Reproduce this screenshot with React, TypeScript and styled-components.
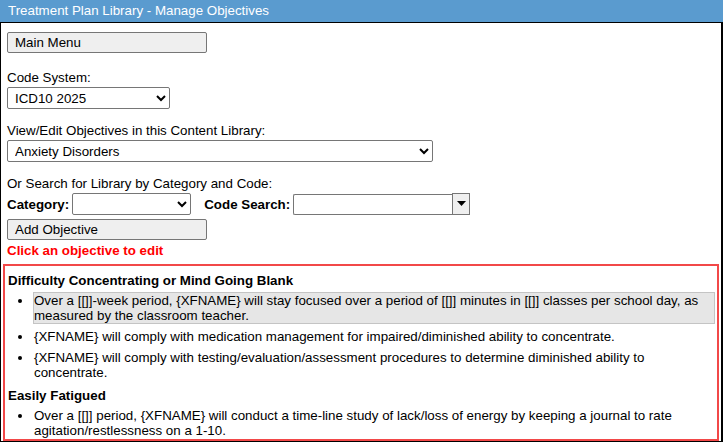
import * as React from 'react';
import styled, { createGlobalStyle } from 'styled-components';

interface Group {
	title: string;
	items: string[];
}

const groups: Group[] = [
	{
		title: 'Difficulty Concentrating or Mind Going Blank',
		items: [
			'Over a [[]]-week period, {XFNAME} will stay focused over a period of [[]] minutes in [[]] classes per school day, as measured by the classroom teacher.',
			'{XFNAME} will comply with medication management for impaired/diminished ability to concentrate.',
			'{XFNAME} will comply with testing/evaluation/assessment procedures to determine diminished ability to concentrate.',
		],
	},
	{
		title: 'Easily Fatigued',
		items: [
			'Over a [[]] period, {XFNAME} will conduct a time-line study of lack/loss of energy by keeping a journal to rate agitation/restlessness on a 1-10.',
		],
	},
];

const App: React.FC = () => {
	return (
		<>
			<GlobalStyle />
			<Header>Treatment Plan Library - Manage Objectives</Header>
			<Panel>
				<Form>
					<MenuButton type="button">Main Menu</MenuButton>
					<Field $gap={16}>
						<FieldLabel>Code System:</FieldLabel>
						<Select $width={163} defaultValue="icd10">
							<option value="icd10">ICD10 2025</option>
						</Select>
					</Field>
					<Field $gap={13}>
						<FieldLabel>View/Edit Objectives in this Content Library:</FieldLabel>
						<Select $width={426} defaultValue="anx">
							<option value="anx">Anxiety Disorders</option>
						</Select>
					</Field>
					<Field $gap={13}>
						<FieldLabel>Or Search for Library by Category and Code:</FieldLabel>
						<SearchRow>
							<InlineLabel>Category:</InlineLabel>
							<Select $width={119} defaultValue="">
								<option value=""></option>
							</Select>
							<InlineLabel $spaced>Code Search:</InlineLabel>
							<Combo>
								<ComboInput type="text" />
								<ComboButton type="button">
									<svg width="9" height="5" viewBox="0 0 9 5">
										<polygon points="0,0 9,0 4.5,5" fill="#000" />
									</svg>
								</ComboButton>
							</Combo>
						</SearchRow>
					</Field>
					<MenuButton type="button" $gap={4}>Add Objective</MenuButton>
					<Hint>Click an objective to edit</Hint>
				</Form>
				<ObjectivesBox>
					{groups.map((group, gi) => (
						<section key={group.title}>
							<GroupTitle>{group.title}</GroupTitle>
							<ObjectiveList>
								{group.items.map((item, ii) => (
									<ObjectiveItem key={ii} $active={gi === 0 && ii === 0}>
										{item}
									</ObjectiveItem>
								))}
							</ObjectiveList>
						</section>
					))}
				</ObjectivesBox>
			</Panel>
		</>
	);
};

export default App;

const GlobalStyle = createGlobalStyle`
	html, body {
		margin: 0;
		padding: 0;
		background: #fff;
	}
	body {
		font-family: "Liberation Sans", Arial, sans-serif;
		font-size: 10pt;
		color: #000;
	}
`

const Header = styled.div`
	height: 22px;
	padding-left: 8px;
	line-height: 22px;
	font-size: 10pt;
	color: #fff;
	background-color: #5a9bcf;
`

const Panel = styled.div`
	border: 1px solid #000;
	border-right-width: 2px;
`

const Form = styled.div`
	display: flex;
	flex-direction: column;
	align-items: flex-start;
	padding: 9px 6px 0;
`

const MenuButton = styled.button<{ $gap?: number }>`
	box-sizing: border-box;
	width: 200px;
	height: 21px;
	margin: ${p => p.$gap || 0}px 0 0;
	padding: 0 7px;
	font-family: inherit;
	font-size: 10pt;
	color: #000;
	text-align: left;
	border: 1px solid #767676;
	border-radius: 2px;
	background-color: #efefef;
`

const Field = styled.div<{ $gap: number }>`
	display: flex;
	flex-direction: column;
	align-items: flex-start;
	margin-top: ${p => p.$gap}px;
`

const FieldLabel = styled.label`
	line-height: 18px;
`

const Select = styled.select<{ $width: number }>`
	box-sizing: border-box;
	width: ${p => p.$width}px;
	height: 22px;
	margin: 0;
	padding: 0 0 0 3px;
	font-family: inherit;
	font-size: 10pt;
	color: #000;
	border: 1px solid #767676;
	border-radius: 2px;
	background-color: #fff;
`

const SearchRow = styled.div`
	display: flex;
	align-items: center;
	height: 22px;
`

const InlineLabel = styled.span<{ $spaced?: boolean }>`
	margin: 0 3px 0 ${p => (p.$spaced ? '13px' : '0')};
	font-weight: 700;
`

const Combo = styled.div`
	display: flex;
	align-items: stretch;
	height: 21px;
`

const ComboInput = styled.input`
	box-sizing: border-box;
	width: 159px;
	height: 21px;
	margin: 0;
	padding: 0 3px;
	font-family: inherit;
	font-size: 10pt;
	border: 1px solid #767676;
	border-right: none;
	border-radius: 2px 0 0 2px;
	outline: none;
`

const ComboButton = styled.button`
	display: flex;
	align-items: center;
	justify-content: center;
	box-sizing: border-box;
	width: 18px;
	height: 22px;
	margin: -1px 0 0;
	padding: 0;
	border: 1px solid #767676;
	background-color: #efefef;
`

const Hint = styled.div`
	margin-top: 2px;
	line-height: 18px;
	font-weight: 700;
	color: #ff0000;
`

const ObjectivesBox = styled.div`
	margin: 4px 2px 0;
	padding: 0 2px 0 3px;
	border: 2px solid #f24848;

	section:last-child li:last-child {
		margin-bottom: 0;
	}
`

const GroupTitle = styled.h3`
	margin: 7px 0 0;
	font-size: 10pt;
	font-weight: 700;
	line-height: normal;
`

const ObjectiveList = styled.ul`
	margin: 0;
	padding-left: 25px;
	list-style: disc outside;
`

const ObjectiveItem = styled.li<{ $active?: boolean }>`
	margin: 4px 0;
	line-height: normal;
	cursor: pointer;
	border: 1px solid ${p => (p.$active ? '#c4c4c4' : 'transparent')};
	background-color: ${p => (p.$active ? '#e6e6e6' : 'transparent')};
`
